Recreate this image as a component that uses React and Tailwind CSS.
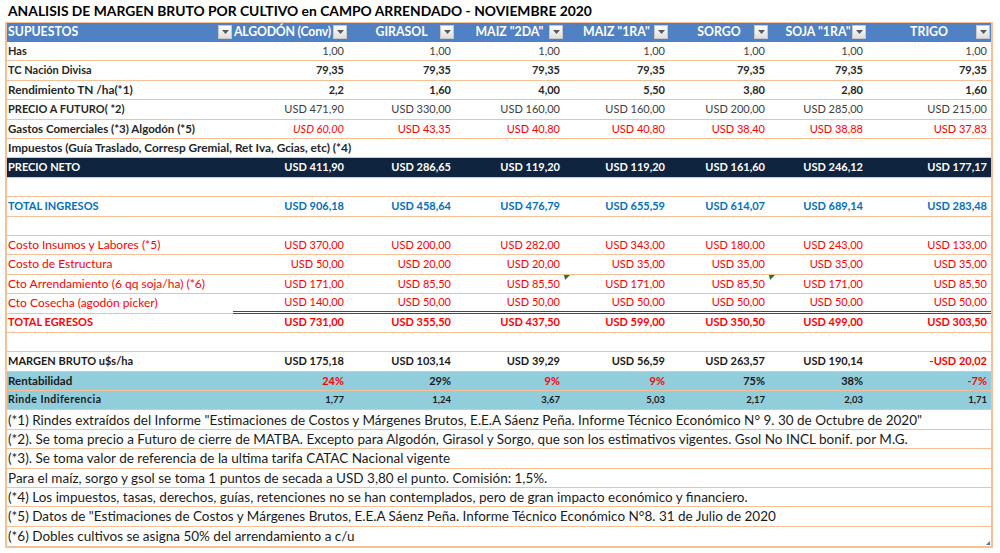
import React from "react";

const GRID = "grid grid-cols-[226px_115px_107px_109px_105px_100px_98px_124px]";
const SEP = "border-b border-[#f6bf96]";

function Drop() {
  return (
    <div className="absolute right-[1px] top-[2px] w-[14px] h-[14px] border border-[#c8c8c8] bg-gradient-to-b from-[#ffffff] to-[#dedede] flex items-center justify-center">
      <svg width="7" height="4" viewBox="0 0 7 4">
        <polygon points="0,0 7,0 3.5,4" fill="#5a5a5a" />
      </svg>
    </div>
  );
}

function Marker() {
  return (
    <svg className="absolute left-0 top-0" width="6" height="5" viewBox="0 0 6 5">
      <polygon points="0,0 6,0 1,5" fill="#1f7a1f" />
    </svg>
  );
}

const headers = ["ALGODÓN (Conv)", "GIRASOL", 'MAIZ "2DA"', 'MAIZ "1RA"', "SORGO", 'SOJA "1RA"', "TRIGO"];

function Row({ label, values = [], labelCls = "font-bold text-[#262626] text-[11px]", valCls = "text-[#404040]", rowCls = "bg-white", sizeCls = "text-[11px]", cellCls = [], markers = [], dbl = false }) {
  return (
    <div className={`${GRID} h-[19.4px] ${rowCls} ${sizeCls}`}>
      <div className={`${SEP} flex items-center pl-[1px] whitespace-nowrap overflow-visible ${labelCls}`}>{label}</div>
      {[0, 1, 2, 3, 4, 5, 6].map((i) => (
        <div
          key={i}
          className={`relative flex items-center justify-end pr-[4px] whitespace-nowrap ${dbl ? "border-b-[3px] border-double border-[#4a4a4a]" : SEP} ${cellCls[i] || valCls}`}
        >
          {markers.includes(i) && <Marker />}
          {values[i] || ""}
        </div>
      ))}
    </div>
  );
}

function Note({ children }) {
  return (
    <div className={`h-[19.4px] ${SEP} flex items-center pl-[1px] whitespace-nowrap text-[13.5px] text-[#1a1a1a]`}>{children}</div>
  );
}

export default function App() {
  const red = "text-[#ff0000]";
  const redL = "text-[#ff0000] text-[12px]";
  const redB = "text-[#ff0000] font-bold";
  const blk = "text-[#1a1a1a] font-bold";
  return (
    <div className="w-[1000px] h-[553px] bg-white relative overflow-hidden" style={{ fontFamily: "Lato, 'Open Sans', sans-serif" }}>
      <div className="h-[22px] pl-[8px] pt-[1px] text-[13.85px] font-bold text-black leading-[20px] whitespace-nowrap">
        ANALISIS DE MARGEN BRUTO POR CULTIVO en CAMPO ARRENDADO - NOVIEMBRE 2020
      </div>
      <div className="ml-[5px] w-[988px] border-x-2 border-t border-[#f6bf96] border-b-2">
        <div className={`${GRID} h-[19px] bg-[#4f81c4] text-white font-bold text-[12.3px]`}>
          <div className="relative flex items-center pl-[1px]">
            SUPUESTOS
            <Drop />
          </div>
          {headers.map((h, i) => (
            <div key={h} className={`relative flex items-center justify-center ${i === 0 ? "pr-[16px] tracking-[-0.2px]" : ""}`}>
              <span className="whitespace-nowrap">{h}</span>
              <Drop />
            </div>
          ))}
        </div>
        <Row label="Has" values={Array(7).fill("1,00")} />
        <Row label="TC Nación Divisa" values={Array(7).fill("79,35")} valCls="font-bold text-[#262626]" />
        <Row
          label="Rendimiento TN /ha(*1)"
          labelCls="font-bold text-[#262626] text-[11.8px]"
          values={["2,2", "1,60", "4,00", "5,50", "3,80", "2,80", "1,60"]}
          valCls="font-bold text-[#262626]"
        />
        <Row label="PRECIO A FUTURO( *2)" values={["USD 471,90", "USD 330,00", "USD 160,00", "USD 160,00", "USD 200,00", "USD 285,00", "USD 215,00"]} />
        <Row
          label="Gastos Comerciales (*3) Algodón (*5)"
          labelCls="font-bold text-[#262626] text-[11.5px]"
          values={["USD 60,00", "USD 43,35", "USD 40,80", "USD 40,80", "USD 38,40", "USD 38,88", "USD 37,83"]}
          valCls={red}
          cellCls={["text-[#ff0000] italic"]}
        />
        <Row label="Impuestos (Guía Traslado, Corresp Gremial, Ret Iva, Gcias, etc) (*4)" labelCls="font-bold text-[#262626] text-[11.8px]" />
        <Row
          label="PRECIO NETO"
          labelCls="font-bold text-white text-[11px]"
          rowCls="bg-[#0f243e]"
          valCls="font-bold text-white"
          values={["USD 411,90", "USD 286,65", "USD 119,20", "USD 119,20", "USD 161,60", "USD 246,12", "USD 177,17"]}
        />
        <Row label="" />
        <Row
          label="TOTAL INGRESOS"
          labelCls="font-bold text-[#0070c0] text-[11px]"
          valCls="font-bold text-[#0070c0]"
          values={["USD 906,18", "USD 458,64", "USD 476,79", "USD 655,59", "USD 614,07", "USD 689,14", "USD 283,48"]}
        />
        <Row label="" />
        <Row
          label="Costo Insumos y Labores (*5)"
          labelCls={redL}
          valCls={red}
          values={["USD 370,00", "USD 200,00", "USD 282,00", "USD 343,00", "USD 180,00", "USD 243,00", "USD 133,00"]}
        />
        <Row
          label="Costo de Estructura"
          labelCls={redL}
          valCls={red}
          values={["USD 50,00", "USD 20,00", "USD 20,00", "USD 35,00", "USD 35,00", "USD 35,00", "USD 35,00"]}
        />
        <Row
          label="Cto Arrendamiento (6 qq soja/ha) (*6)"
          labelCls={redL}
          valCls={red}
          markers={[3, 5]}
          values={["USD 171,00", "USD 85,50", "USD 85,50", "USD 171,00", "USD 85,50", "USD 171,00", "USD 85,50"]}
        />
        <Row
          label="Cto Cosecha (agodón picker)"
          labelCls={redL}
          valCls={red}
          dbl
          values={["USD 140,00", "USD 50,00", "USD 50,00", "USD 50,00", "USD 50,00", "USD 50,00", "USD 50,00"]}
        />
        <Row
          label="TOTAL EGRESOS"
          labelCls={`${redB} text-[11px]`}
          valCls={redB}
          values={["USD 731,00", "USD 355,50", "USD 437,50", "USD 599,00", "USD 350,50", "USD 499,00", "USD 303,50"]}
        />
        <Row label="" />
        <Row
          label="MARGEN BRUTO u$s/ha"
          labelCls={`${blk} text-[11px]`}
          valCls={blk}
          cellCls={[null, null, null, null, null, null, redB]}
          values={["USD 175,18", "USD 103,14", "USD 39,29", "USD 56,59", "USD 263,57", "USD 190,14", "-USD 20,02"]}
        />
        <Row
          label="Rentabilidad"
          labelCls={`${blk} text-[11.6px]`}
          valCls={blk}
          rowCls="bg-[#92cddc]"
          cellCls={[redB, null, redB, redB, null, null, redB]}
          values={["24%", "29%", "9%", "9%", "75%", "38%", "-7%"]}
        />
        <Row
          label="Rinde Indiferencia"
          labelCls={`${blk} text-[10.5px] tracking-[0.5px]`}
          valCls={blk}
          rowCls="bg-[#92cddc]"
          sizeCls="text-[9.5px]"
          values={["1,77", "1,24", "3,67", "5,03", "2,17", "2,03", "1,71"]}
        />
        <Note>(*1) Rindes extraídos del Informe "Estimaciones de Costos y Márgenes Brutos, E.E.A Sáenz Peña. Informe Técnico Económico N° 9. 30 de Octubre de 2020"</Note>
        <Note>(*2). Se toma precio a Futuro de cierre de MATBA. Excepto para Algodón, Girasol y Sorgo, que son los estimativos vigentes. Gsol No INCL bonif. por M.G.</Note>
        <Note>(*3). Se toma valor de referencia de la ultima tarifa CATAC Nacional vigente</Note>
        <Note>Para el maíz, sorgo y gsol se toma 1 puntos de secada a USD 3,80 el punto. Comisión: 1,5%.</Note>
        <Note>(*4) Los impuestos, tasas, derechos, guías, retenciones no se han contemplados, pero de gran impacto económico y financiero.</Note>
        <Note>(*5) Datos de "Estimaciones de Costos y Márgenes Brutos, E.E.A Sáenz Peña. Informe Técnico Económico N°8. 31 de Julio de 2020</Note>
        <div className="relative h-[19.4px] flex items-center pl-[1px] whitespace-nowrap text-[13.5px] text-[#1a1a1a]">
          (*6) Dobles cultivos se asigna 50% del arrendamiento a c/u
          <svg className="absolute right-[1px] bottom-[1px]" width="4" height="4" viewBox="0 0 4 4">
            <polygon points="4,0 4,4 0,4" fill="#4f6fa8" />
          </svg>
        </div>
      </div>
    </div>
  );
}
